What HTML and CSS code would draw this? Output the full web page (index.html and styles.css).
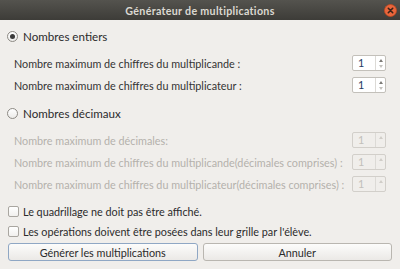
FILE: index.html
```html
<!DOCTYPE html>
<html lang="fr">
<head>
    <meta charset="UTF-8">
    <title>Générateur de multiplications</title>
    <link rel="stylesheet" href="styles.css">
</head>
<body>
    <div class="window">
        <div class="titlebar">
            <span class="title">Générateur de multiplications</span>
            <span class="close">
                <svg width="13" height="13" viewBox="0 0 13 13">
                    <circle cx="6.5" cy="6.5" r="6" fill="#e9663c" stroke="#c24a22" stroke-width="0.8"/>
                    <path d="M4.3 4.3 L8.7 8.7 M8.7 4.3 L4.3 8.7" stroke="#3a2218" stroke-width="1.6" stroke-linecap="round"/>
                </svg>
            </span>
        </div>

        <div class="content">
            <label class="choice first">
                <span class="radio checked"></span>
                <span>Nombres entiers</span>
            </label>
            <div class="row">
                <span>Nombre maximum de chiffres du multiplicande :</span>
                <span class="spin"><span class="value">1</span><span class="arrows"><i class="up"></i><i class="down"></i></span></span>
            </div>
            <div class="row">
                <span>Nombre maximum de chiffres du multiplicateur :</span>
                <span class="spin"><span class="value">1</span><span class="arrows"><i class="up"></i><i class="down"></i></span></span>
            </div>

            <label class="choice">
                <span class="radio"></span>
                <span>Nombres décimaux</span>
            </label>
            <div class="row disabled">
                <span>Nombre maximum de décimales:</span>
                <span class="spin"><span class="value">1</span><span class="arrows"><i class="up"></i></span></span>
            </div>
            <div class="row disabled">
                <span>Nombre maximum de chiffres du multiplicande(décimales comprises) :</span>
                <span class="spin"><span class="value">1</span><span class="arrows"><i class="up"></i></span></span>
            </div>
            <div class="row disabled">
                <span>Nombre maximum de chiffres du multiplicateur(décimales comprises) :</span>
                <span class="spin"><span class="value">1</span><span class="arrows"><i class="up"></i></span></span>
            </div>

            <label class="check first">
                <span class="box"></span>
                <span>Le quadrillage ne doit pas être affiché.</span>
            </label>
            <label class="check">
                <span class="box"></span>
                <span>Les opérations doivent être posées dans leur grille par l'élève.</span>
            </label>

            <div class="buttons">
                <button class="btn default">Générer les multiplications</button>
                <button class="btn">Annuler</button>
            </div>
        </div>
    </div>
</body>
</html>
```

FILE: styles.css
```css
body {
    margin: 0;
    font-family: 'Lato', 'DejaVu Sans', sans-serif;
    font-size: 10.8px;
    color: #333333;
    background-color: #f0eeeb;
}
.window {
    width: 400px;
    height: 269px;
    overflow: hidden;
}
.titlebar {
    height: 20px;
    background: linear-gradient(#54534e, #3d3c38);
    display: flex;
    align-items: center;
    justify-content: center;
    position: relative;
}
.title {
    color: #dcd9d2;
    font-weight: bold;
    font-size: 10.7px;
    letter-spacing: 0.3px;
}
.close {
    position: absolute;
    right: 3px;
    top: 4px;
    height: 13px;
}
.content {
    padding: 5px 14px 0 7px;
    display: flex;
    flex-direction: column;
}
.choice, .check {
    display: flex;
    align-items: center;
    gap: 5px;
    height: 22px;
    color: #2b2b2b;
    white-space: nowrap;
}
.choice {
    margin-top: 6px;
    font-size: 11.6px;
}
.choice.first {
    margin-top: 0;
}
.radio {
    width: 9px;
    height: 9px;
    border: 1px solid #8d8a84;
    border-radius: 50%;
    background: linear-gradient(#ffffff, #ecebe9);
    display: flex;
    align-items: center;
    justify-content: center;
}
.radio.checked::after {
    content: "";
    width: 5px;
    height: 5px;
    border-radius: 50%;
    background-color: #3a3a3a;
}
.row {
    display: flex;
    align-items: center;
    justify-content: space-between;
    height: 22px;
    padding-left: 7px;
    white-space: nowrap;
}
.choice + .row {
    margin-top: 5px;
}
.row.disabled {
    color: #b4b1ab;
}
.spin {
    display: flex;
    flex: none;
    width: 34px;
    height: 16px;
    box-sizing: border-box;
    border: 1px solid #c3c0ba;
    border-radius: 2px;
    background-color: #ffffff;
}
.value {
    flex: 1;
    padding-left: 5px;
    line-height: 14px;
    color: #273b63;
}
.arrows {
    width: 9px;
    border-left: 1px solid #dcdad6;
    display: flex;
    flex-direction: column;
    align-items: center;
    justify-content: center;
    gap: 3px;
}
.arrows i {
    width: 0;
    height: 0;
    border-left: 2.5px solid transparent;
    border-right: 2.5px solid transparent;
}
.arrows .up {
    border-bottom: 3px solid #7c7a76;
}
.arrows .down {
    border-top: 3px solid #c4c2be;
}
.disabled .spin {
    background-color: #f0eeeb;
    border-color: #d2cfca;
}
.disabled .value {
    color: #c2bfba;
}
.disabled .arrows {
    justify-content: flex-start;
    padding-top: 3px;
}
.disabled .arrows .up {
    border-bottom-color: #d0cdc8;
}
.check {
    height: 20px;
    padding-left: 1px;
    gap: 4px;
}
.check.first {
    margin-top: 6px;
}
.box {
    width: 9px;
    height: 9px;
    border: 1px solid #a9a6a0;
    border-radius: 2px;
    background: linear-gradient(#ffffff, #f1f0ee);
}
.buttons {
    display: flex;
    gap: 5px;
    margin-top: 2px;
    margin-right: -6px;
    padding-left: 1px;
}
.btn {
    flex: 1;
    height: 18px;
    padding: 0;
    font-family: inherit;
    font-size: 10.8px;
    color: #2b2b2b;
    border: 1px solid #b9b6b0;
    border-radius: 3px;
    background: linear-gradient(#fcfcfb, #ebe9e6);
}
.btn.default {
    border-color: #8fa7c4;
}
```
